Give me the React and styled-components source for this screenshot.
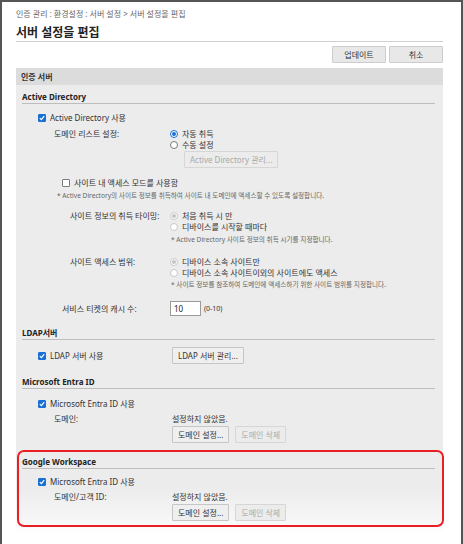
import styled, { createGlobalStyle } from 'styled-components'

const GlobalStyle = createGlobalStyle`
  html, body {
    margin: 0;
    padding: 0;
    background: #fff;
  }
  body {
    font-family: "Noto Sans", "Noto Sans CJK KR", sans-serif;
    color: #333;
  }
  * {
    box-sizing: border-box;
  }
`

const Frame = styled.div`
  position: relative;
  width: 463px;
  height: 544px;
  overflow: hidden;
  border: 2px solid #555;
  border-bottom: none;
  padding: 0 18px 0 14px;
  background: #fff;
`

// white fade over the bottom edge of the window
const FadeOut = styled.div`
  position: absolute;
  left: 0;
  right: 0;
  bottom: 0;
  height: 56px;
  z-index: 1;
  pointer-events: none;
  background: linear-gradient(
    to bottom,
    rgba(255, 255, 255, 0) 0%,
    rgba(255, 255, 255, 0.55) 55%,
    #fff 80%
  );
`

const Breadcrumb = styled.div`
  padding-top: 6px;
  font-size: 8px;
  line-height: 12px;
  color: #666;
  white-space: nowrap;
`

const PageTitle = styled.h1`
  margin: 6px 0 0;
  padding-bottom: 1px;
  font-size: 12px;
  line-height: 14px;
  font-weight: 700;
  color: #222;
  border-bottom: 1px solid #cfcfcf;
`

const Toolbar = styled.div`
  display: flex;
  justify-content: flex-end;
  gap: 3px;
  margin-top: 4px;
`

const ActionButton = styled.button`
  width: 54px;
  height: 17px;
  padding: 0;
  font: inherit;
  font-size: 8px;
  color: #333;
  background: #e8e8e8;
  border: 1px solid #cdcdcd;
  border-radius: 1px;
`

const SectionBar = styled.div`
  margin-top: 5px;
  height: 17px;
  padding-left: 5px;
  display: flex;
  align-items: center;
  font-size: 8px;
  font-weight: 700;
  background: #dcdcdc;
`

const Panel = styled.div`
  background: #ececec;
  padding: 0 8px 6px 6px;
`

const Group = styled.div`
  position: relative;
  margin-top: ${p => p.$gap || 0}px;
  ${p => p.$highlight && `
    z-index: 2;
    margin-left: -5px;
    margin-right: -9px;
    padding: 2px 7px 4px 3px;
    border: 2px solid #ea1f26;
    border-radius: 7px;
  `}
`

const GroupTitle = styled.div`
  padding-top: ${p => (p.$pad ?? 6)}px;
  font-size: 8px;
  line-height: 12px;
  font-weight: 700;
  color: #222;
  border-bottom: 1px solid #bdbdbd;
`

const CheckRow = styled.label`
  display: flex;
  align-items: center;
  gap: 4px;
  margin-top: ${p => p.$gap || 0}px;
  padding-left: ${p => p.$indent || 0}px;
  font-size: 8px;
  line-height: 12px;
`

const Box = styled.span`
  width: 8px;
  height: 8px;
  flex: none;
  display: flex;
  align-items: center;
  justify-content: center;
  border-radius: 1px;
  background: ${p => (p.$checked ? '#1a6fd4' : '#fff')};
  border: 1px solid ${p => (p.$checked ? '#1a6fd4' : '#7a7a7a')};
`

const FieldRow = styled.div`
  display: grid;
  grid-template-columns: 148px 1fr;
  align-items: ${p => p.$center ? 'center' : 'start'};
  margin-top: ${p => p.$gap || 0}px;
  font-size: 8px;
  line-height: 12px;
`

const Label = styled.div`
  padding-left: ${p => p.$indent || 0}px;
  white-space: nowrap;
`

const Value = styled.div`
  display: flex;
  flex-direction: column;
  align-items: flex-start;
  padding-left: ${p => p.$shift || 0}px;
`

const RadioOption = styled.label`
  display: flex;
  align-items: center;
  gap: 4px;
  height: 11.5px;
  white-space: nowrap;
  color: #333;
`

const Dot = styled.span`
  width: 8px;
  height: 8px;
  flex: none;
  border-radius: 50%;
  background: #fff;
  border: 1px solid ${p => (p.$checked && !p.$disabled ? '#1a6fd4' : p.$disabled ? '#c9c9c9' : '#7a7a7a')};
  display: flex;
  align-items: center;
  justify-content: center;

  &::after {
    content: '';
    display: ${p => (p.$checked ? 'block' : 'none')};
    width: 4px;
    height: 4px;
    border-radius: 50%;
    background: ${p => (p.$disabled ? '#c4c4c4' : '#1a6fd4')};
  }
`

const Note = styled.div`
  margin-top: ${p => p.$gap || 0}px;
  padding-left: ${p => p.$indent || 0}px;
  font-size: 6.6px;
  line-height: 12px;
  color: #666;
  white-space: nowrap;
`

const Button = styled.button`
  height: 17px;
  padding: 0 5px;
  margin-top: ${p => p.$gap || 0}px;
  margin-left: ${p => p.$shift || 0}px;
  font: inherit;
  font-size: 8px;
  color: ${p => (p.$disabled ? '#aaa' : '#333')};
  background: ${p => (p.$disabled ? '#ececec' : '#efefef')};
  border: 1px solid ${p => (p.$disabled ? '#d6d6d6' : '#c6c6c6')};
  border-radius: 1px;
  white-space: nowrap;
`

const ButtonRow = styled.div`
  display: flex;
  gap: 6px;
  margin-top: ${p => p.$gap || 0}px;
`

const NumberBox = styled.div`
  display: flex;
  align-items: center;
  gap: 3px;
`

const Input = styled.input`
  width: 31px;
  height: 15px;
  padding: 0 3px;
  font: inherit;
  font-size: 8px;
  color: #222;
  background: #fff;
  border: 1px solid #9a9a9a;
  border-radius: 0;
`

const Hint = styled.span`
  font-size: 7px;
`

const Tick = () => (
  <svg width="6" height="6" viewBox="0 0 6 6">
    <path d="M0.8 3.1 L2.4 4.6 L5.2 1.2" fill="none" stroke="#fff" strokeWidth="1.2" />
  </svg>
)

const CheckBox = ({ checked }) => (
  <Box $checked={checked}>{checked && <Tick />}</Box>
)

const Radio = ({ checked, disabled, children }) => (
  <RadioOption>
    <Dot $checked={checked} $disabled={disabled} />
    {children}
  </RadioOption>
)

const DomainButtons = ({ gap }) => (
  <ButtonRow $gap={gap}>
    <Button>도메인 설정...</Button>
    <Button $disabled>도메인 삭제</Button>
  </ButtonRow>
)

export default function App() {
  return (
    <Frame>
      <GlobalStyle />
      <Breadcrumb>인증 관리 : 환경설정 : 서버 설정 &gt; 서버 설정을 편집</Breadcrumb>
      <PageTitle>서버 설정을 편집</PageTitle>
      <Toolbar>
        <ActionButton>업데이트</ActionButton>
        <ActionButton>취소</ActionButton>
      </Toolbar>
      <SectionBar>인증 서버</SectionBar>

      <Panel>
        <Group>
          <GroupTitle>Active Directory</GroupTitle>
          <CheckRow $gap={8} $indent={16}>
            <CheckBox checked />
            Active Directory 사용
          </CheckRow>

          <FieldRow $gap={4}>
            <Label $indent={32}>도메인 리스트 설정:</Label>
            <Value>
              <Radio checked>자동 취득</Radio>
              <Radio>수동 설정</Radio>
              <Button $disabled $shift={14}>Active Directory 관리...</Button>
            </Value>
          </FieldRow>

          <CheckRow $gap={9} $indent={40}>
            <CheckBox />
            사이트 내 액세스 모드를 사용함
          </CheckRow>
          <Note $gap={1} $indent={35}>
            * Active Directory의 사이트 정보를 취득하여 사이트 내 도메인에 액세스할 수 있도록 설정합니다.
          </Note>

          <FieldRow $gap={8}>
            <Label $indent={48}>사이트 정보의 취득 타이밍:</Label>
            <Value>
              <Radio checked disabled>처음 취득 시 만</Radio>
              <Radio disabled>디바이스를 시작할 때마다</Radio>
            </Value>
          </FieldRow>
          <Note $gap={1} $indent={149}>* Active Directory 사이트 정보의 취득 시기를 지정합니다.</Note>

          <FieldRow $gap={10}>
            <Label $indent={48}>사이트 액세스 범위:</Label>
            <Value>
              <Radio checked disabled>디바이스 소속 사이트만</Radio>
              <Radio disabled>디바이스 소속 사이트이외의 사이트에도 액세스</Radio>
            </Value>
          </FieldRow>
          <Note $indent={149}>* 사이트 정보를 참조하여 도메인에 액세스하기 위한 사이트 범위를 지정합니다.</Note>

          <FieldRow $gap={10} $center>
            <Label $indent={40}>서비스 티켓의 캐시 수:</Label>
            <NumberBox>
              <Input defaultValue="10" />
              <Hint>(0-10)</Hint>
            </NumberBox>
          </FieldRow>
        </Group>

        <Group $gap={5}>
          <GroupTitle>LDAP서버</GroupTitle>
          <FieldRow $gap={7} $center>
            <CheckRow $indent={16}>
              <CheckBox checked />
              LDAP 서버 사용
            </CheckRow>
            <Value $shift={2}>
              <Button>LDAP 서버 관리...</Button>
            </Value>
          </FieldRow>
        </Group>

        <Group $gap={6}>
          <GroupTitle>Microsoft Entra ID</GroupTitle>
          <CheckRow $gap={9} $indent={16}>
            <CheckBox checked />
            Microsoft Entra ID 사용
          </CheckRow>
          <FieldRow $gap={3}>
            <Label $indent={32}>도메인:</Label>
            <Value $shift={2}>
              설정하지 않았음.
              <DomainButtons gap={1} />
            </Value>
          </FieldRow>
        </Group>

        <Group $gap={7} $highlight>
          <GroupTitle $pad={2}>Google Workspace</GroupTitle>
          <CheckRow $gap={7} $indent={16}>
            <CheckBox checked />
            Microsoft Entra ID 사용
          </CheckRow>
          <FieldRow $gap={3}>
            <Label $indent={32}>도메인/고객 ID:</Label>
            <Value $shift={2}>
              설정하지 않았음.
              <DomainButtons gap={1} />
            </Value>
          </FieldRow>
        </Group>
      </Panel>
      <FadeOut />
    </Frame>
  )
}
